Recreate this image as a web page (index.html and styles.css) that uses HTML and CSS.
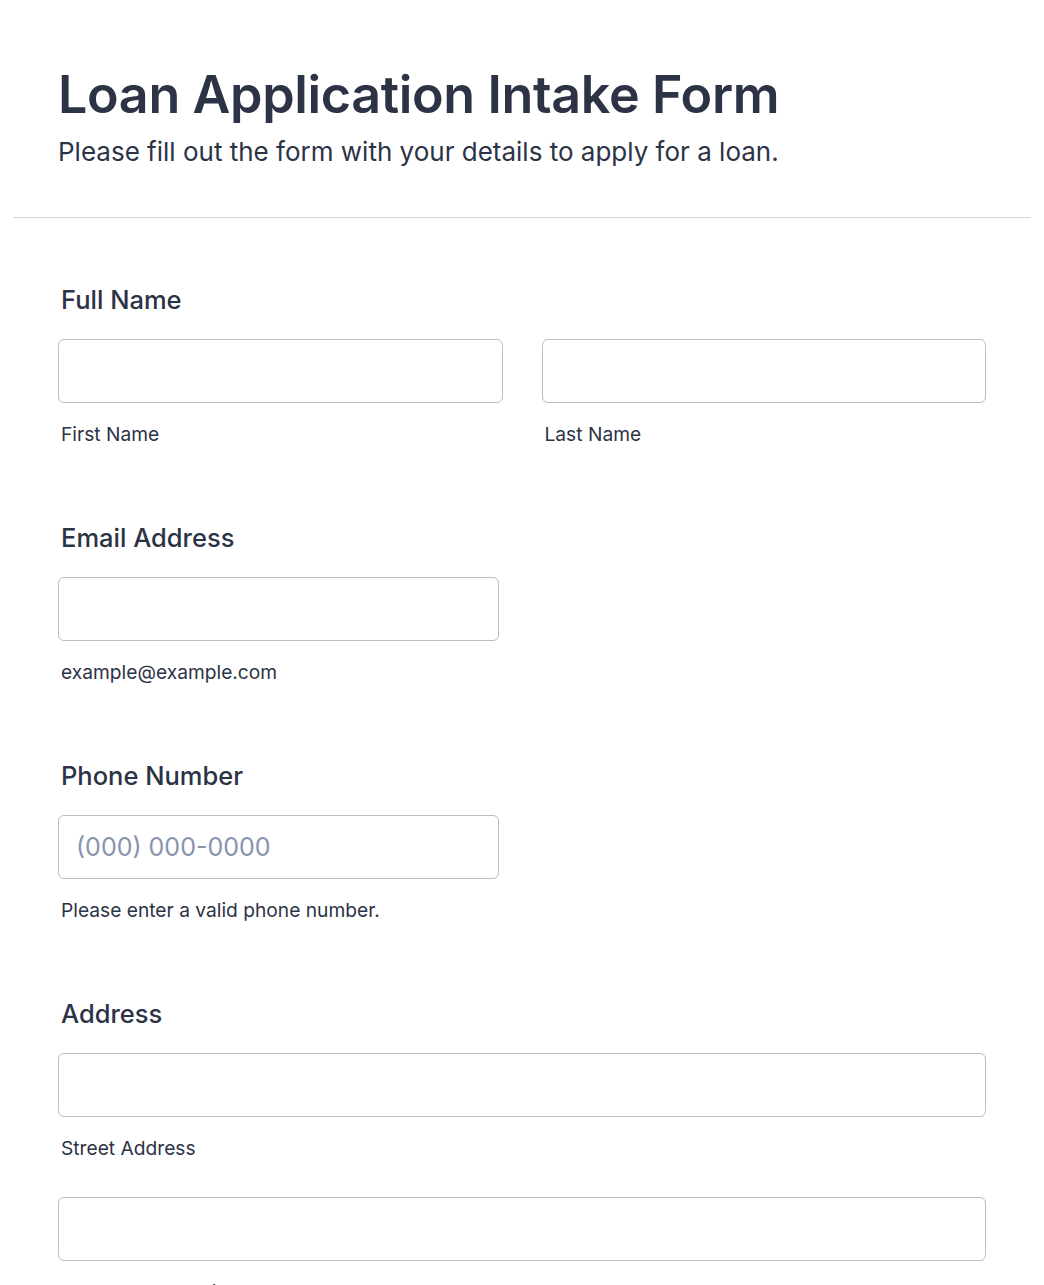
FILE: index.html
```html
<!DOCTYPE html>
<html lang="en">
<head>
  <meta charset="UTF-8">
  <meta name="viewport" content="width=device-width, initial-scale=1.0">
  <title>Loan Application Intake Form</title>
  <link rel="stylesheet" href="styles.css">
</head>
<body>
  <div class="form-header">
    <h1>Loan Application Intake Form</h1>
    <p>Please fill out the form with your details to apply for a loan.</p>
  </div>

  <form class="form-body">
    <div class="field">
      <label class="field-label">Full Name</label>
      <div class="field-row">
        <div class="field-col">
          <input type="text" id="first_name">
          <span class="sublabel">First Name</span>
        </div>
        <div class="field-col">
          <input type="text" id="last_name">
          <span class="sublabel">Last Name</span>
        </div>
      </div>
    </div>

    <div class="field">
      <label class="field-label">Email Address</label>
      <div class="field-row">
        <div class="field-col half">
          <input type="email" id="email">
          <span class="sublabel">example@example.com</span>
        </div>
      </div>
    </div>

    <div class="field">
      <label class="field-label">Phone Number</label>
      <div class="field-row">
        <div class="field-col half">
          <input type="tel" id="phone" placeholder="(000) 000-0000">
          <span class="sublabel">Please enter a valid phone number.</span>
        </div>
      </div>
    </div>

    <div class="field">
      <label class="field-label">Address</label>
      <div class="field-col">
        <input type="text" id="street">
        <span class="sublabel">Street Address</span>
      </div>
      <div class="field-col">
        <input type="text" id="street2">
        <span class="sublabel">Street Address Line 2</span>
      </div>
    </div>
  </form>
</body>
</html>
```

FILE: styles.css
```css
body {
  margin: 0;
  font-family: Inter, 'Noto Sans', sans-serif;
  background: #fff;
  color: #2c3345;
}
.form-header {
  margin: 0 13px;
  padding: 64px 45px 46px;
  border-bottom: 1px solid #d4d4dc;
}
.form-header h1 {
  margin: 0;
  font-size: 52px;
  font-weight: 600;
  line-height: 1.2;
  letter-spacing: -0.35px;
}
.form-header p {
  margin: 8px 0 0;
  font-size: 26px;
  line-height: 1.4;
}
.form-body {
  padding: 64px 58px 0;
}
.field {
  margin-bottom: 37px;
}
.field-label {
  display: block;
  margin: 0 0 21px 3px;
  font-size: 25.5px;
  font-weight: 500;
  line-height: 36px;
}
.field-row {
  display: flex;
  gap: 39px;
}
.field-col {
  flex: 1;
  display: flex;
  flex-direction: column;
  margin-bottom: 37px;
}
.field-col.half {
  flex: none;
  width: 441px;
}
input {
  box-sizing: border-box;
  width: 100%;
  height: 64px;
  padding: 0 17px;
  font-family: inherit;
  font-size: 25px;
  color: #2c3345;
  border: 1px solid #b8bdc9;
  border-radius: 6px;
  background: #fff;
  outline: none;
}
input::placeholder {
  color: #8894ab;
}
.sublabel {
  margin: 19px 0 0 3px;
  font-size: 19.2px;
  line-height: 24px;
}
```
